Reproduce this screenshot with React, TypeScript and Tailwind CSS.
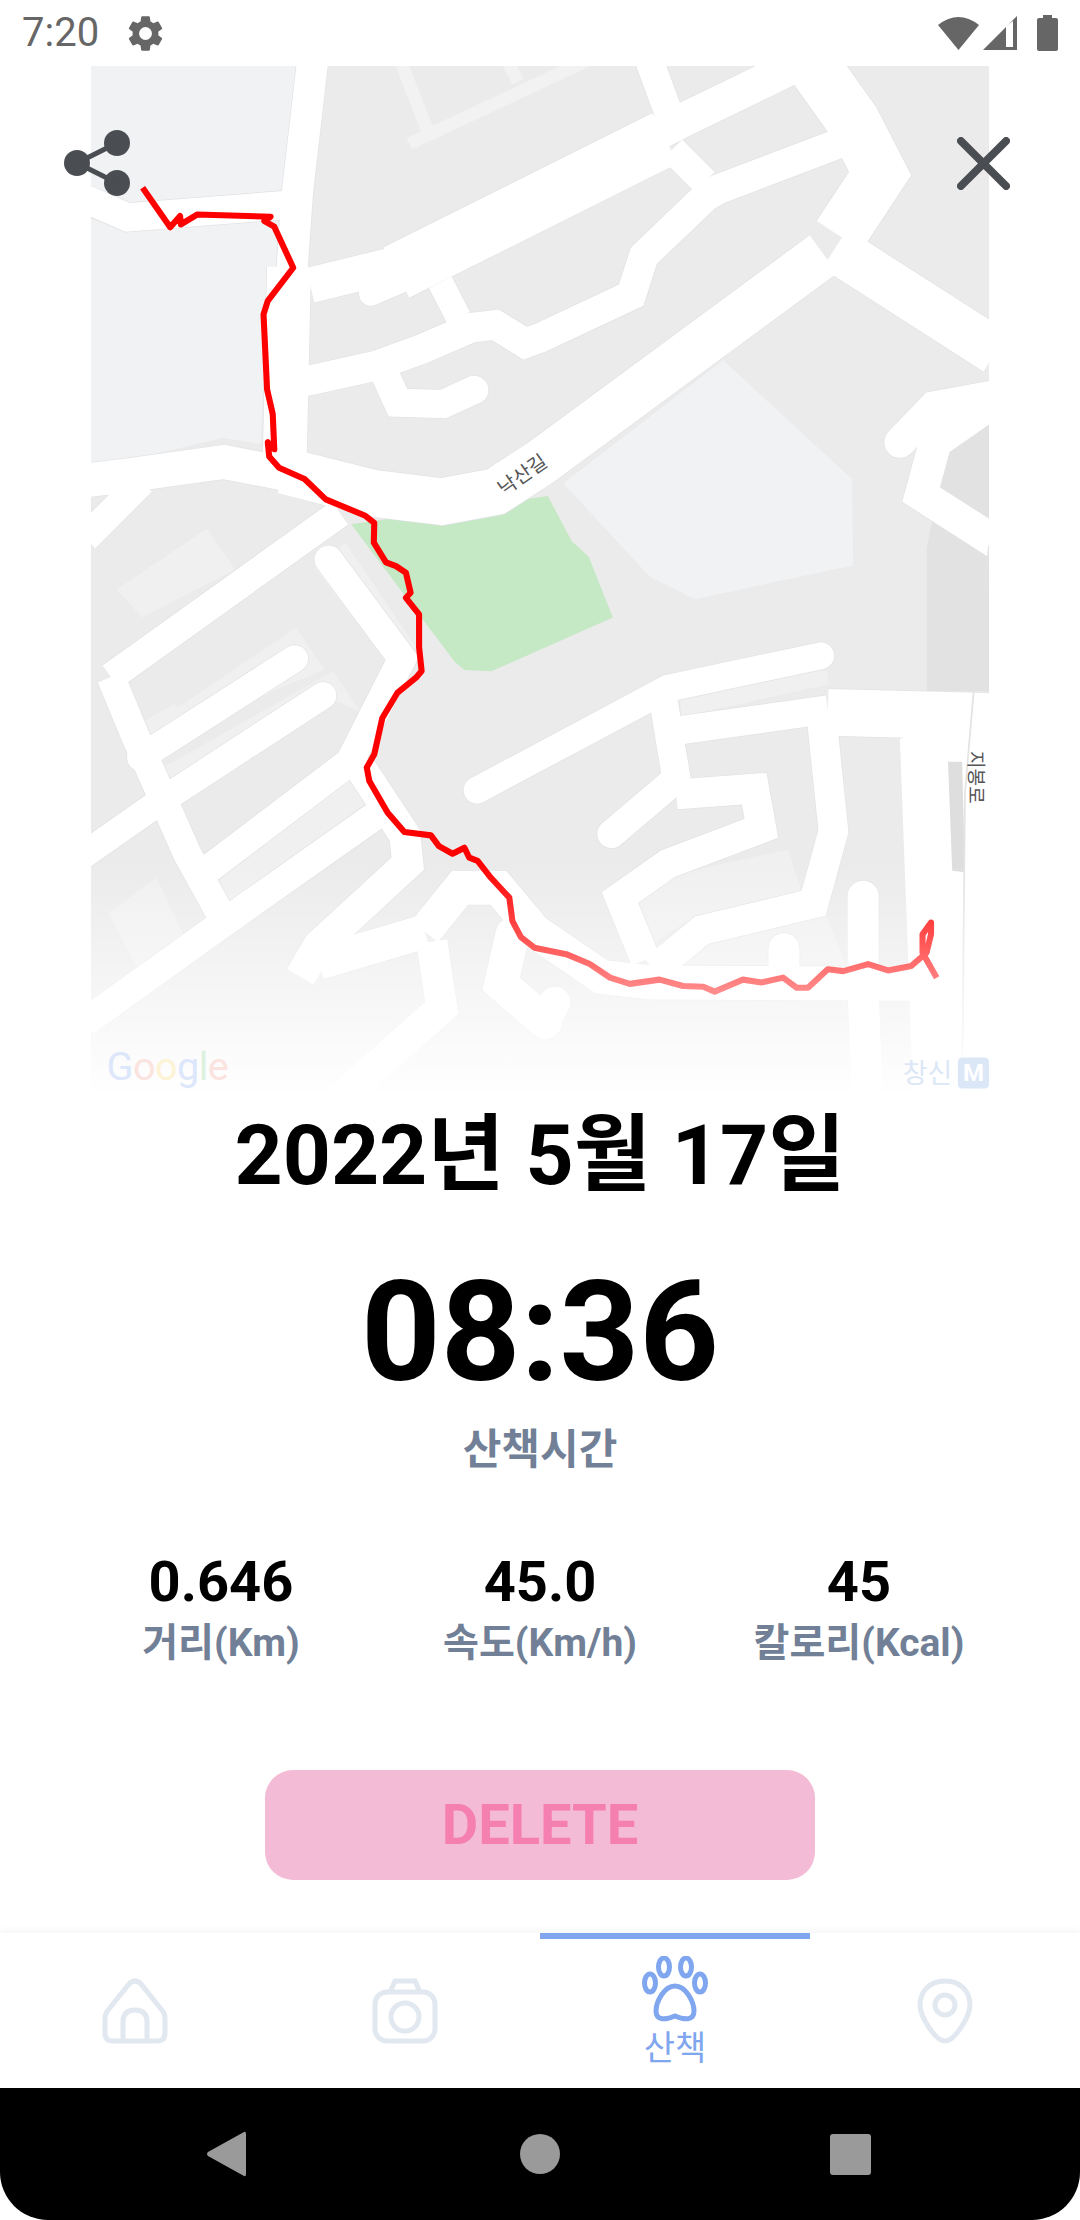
import React from "react";

// roads of the map, in the coordinates of the map's viewBox
const roads: { d: string; w: number; round?: boolean }[] = [
  // upper part
  { d: "M221 40 L210 135 L206 192", w: 22 },
  { d: "M204 188 L201 325", w: 31 },
  { d: "M60 140 L90 153 L205 144", w: 20 },
  { d: "M60 339 L93 335 L158 326 L205 335", w: 24 },
  { d: "M200 332 L263 348 L312 354 L350 347 L381 327 L582 179", w: 33 },
  { d: "M219 201 L280 186", w: 25 },
  { d: "M280 192 L320 172 L470 97", w: 40 },
  { d: "M262 207 L290 195", w: 17, round: true },
  { d: "M311 199 L324 224", w: 18 },
  { d: "M215 269 L265 258 L298 246 L333 231 L350 229 L371 242 L382 238 L446 208 L455 180 L499 138 L508 133 L592 101", w: 21 },
  { d: "M475 105 L498 128", w: 20 },
  { d: "M458 40 L472 78", w: 20 },
  { d: "M460 96 L485 83 L545 54 L565 44", w: 24 },
  { d: "M568 36 L603 85 L622 122 L593 166", w: 38 },
  { d: "M590 175 L704 248", w: 33 },
  { d: "M271 262 L281 284 L313 285 L335 275", w: 20, round: true },
  { d: "M704 279 L660 287 L636 312", w: 22, round: true },
  { d: "M704 282 L661 312 L651 349 L704 383", w: 23 },
  // lower left
  { d: "M60 380 L100 340", w: 20 },
  { d: "M78 478 L240 362", w: 20 },
  { d: "M78 478 L95 519 L132 603 L158 650", w: 20 },
  { d: "M99 535 L208 465", w: 19, round: true },
  { d: "M60 603 L110 568 L228 491", w: 19, round: true },
  { d: "M232 395 L284 465 L247 538 L148 613", w: 20, round: true },
  { d: "M60 722 L156 653 L268 574", w: 20 },
  { d: "M253 540 L286 590 L288 610 L225 668 L212 690", w: 22 },
  { d: "M225 680 L300 658", w: 24 },
  { d: "M300 658 L325 627 L352 627 L378 658 L425 690 L460 694 L650 695", w: 24 },
  { d: "M362 660 L354 695 L385 722", w: 24, round: true },
  { d: "M385 722 L392 708", w: 22, round: true },
  { d: "M305 665 L312 712 L230 785", w: 22 },
  // lower right
  { d: "M580 463 L472 486 L337 558", w: 19, round: true },
  { d: "M468 490 L478 550 L432 589", w: 20, round: true },
  { d: "M478 561 L533 557 L538 585 L472 610 L438 634 L456 678", w: 21 },
  { d: "M478 516 L585 501", w: 20 },
  { d: "M585 503 L704 506", w: 33 },
  { d: "M581 510 L589 587 L575 638 L496 657 L462 685", w: 21 },
  { d: "M610 633 L610 700 L613 775", w: 22, round: true },
  { d: "M554 670 L554 695", w: 22, round: true },
];

const routePoints =
  "100.5,132 120,160 127,152 127.6,158 139,151 191,152.5 186.6,155.6 193.6,159.6 207,188.6 189,212 186,221.6 188.5,274.6 192.5,292 193.6,317 189,312 190,322 197,330 215,338 230,352.4 258,364 264.3,369 264,383 272.6,397 279.7,399.6 286.7,404.3 290,418.4 286.7,422 296,433.7 296,457 297.8,473.8 293.8,478.5 280.8,489 270,507 264.3,532.7 259,542 260.8,551.6 273.8,574 285.6,587.6 304.4,590 310,597.6 319.7,603 328,598.7 331.5,605.8 337.4,608 346.8,620 359.8,634 362,650.6 368,662 377.5,669.4 400,674 416.7,681 431,690.6 445,695 466,692 482.7,696.5 497,697 505,700.5 525,692 538,694 553.4,690.6 563,697.7 571,697.7 585,684.7 596,686 613.5,681 627.6,685.5 644,682.4 654.8,673 658,660 658,651.7 652,660 652,673 662,690.6";

const RouteMap = () => (
  <svg viewBox="64 46 635 724" className="block w-[898px] h-[1024px]">
    <defs>
      <linearGradient id="mapFade" x1="0" y1="610" x2="0" y2="770" gradientUnits="userSpaceOnUse">
        <stop offset="0" stopColor="#fff" stopOpacity="0" />
        <stop offset="1" stopColor="#fff" stopOpacity="0.97" />
      </linearGradient>
    </defs>
    <rect x="64" y="46" width="635" height="724" fill="#ebebeb" />
    <polygon points="64,46 209,46 199,134 91,143 64,131" fill="#f1f2f4" />
    <polygon points="64,154 88,163 196,154 195,192 189,204 184,313 157,309 93,324 88,328 64,328" fill="#f1f2f4" />
    <polygon points="511,254 602,338 603,399 491,423 459,407 398,341" fill="#f1f2f4" />
    <polygon points="655,488 655,387 672,300 699,290 699,488" fill="#e2e2e2" />
    <polygon
      points="248,370 321,467 328,473 347,474 433,436 416,393 404,382 387,350"
      fill="#c5e8c5"
    />
    {/* paler blocks and alleys */}
    <polygon points="82,416 146,373 166,402 100,436" fill="#f0f0f0" />
    <polygon points="102,509 123,497 125,500 209,443 229,473 106,523" fill="#f0f0f0" />
    <polygon points="115,542 235,474 255,503 237,495 119,552" fill="#f0f0f0" />
    <polygon points="154,622 249,549 260,566 163,638" fill="#f0f0f0" />
    <polygon points="222,401 244,383 294,457 274,469" fill="#f0f0f0" />
    <polygon points="480,493 584,473 586,483 482,506" fill="#f0f0f0" />
    <polygon points="451,638 463,665 492,647 566,629 557,600 497,613 477,619" fill="#f0f0f0" />
    <polygon points="584,647 598,682 465,683 500,667" fill="#f0f0f0" />
    <polygon points="76,645 110,620 132,665 100,690" fill="#f0f0f0" />
    <path d="M282 40 L302 92 M289 101 L415 42 M357 40 L366 57" fill="none" stroke="#f2f2f2" strokeWidth="9" />
    {roads.map((r, i) => (
      <path
        key={"edge" + i}
        d={r.d}
        fill="none"
        stroke="#e2e3e6"
        strokeWidth={r.w + 1}
        strokeLinejoin="miter"
        strokeLinecap={r.round ? "round" : "butt"}
      />
    ))}
    <polygon points="636,522 642,682 645,772 701,772 701,490" fill="#fff" />
    {roads.map((r, i) => (
      <path
        key={i}
        d={r.d}
        fill="none"
        stroke="#fff"
        strokeWidth={r.w}
        strokeLinejoin="miter"
        strokeLinecap={r.round ? "round" : "butt"}
      />
    ))}
    <polygon points="670,538 680,538 682,616 673,615" fill="#dedede" />
    <path d="M699 385 L688 490 L682 560 L680 770" fill="none" stroke="#e3e3e3" strokeWidth="1.2" />
    <polyline
      points={routePoints}
      fill="none"
      stroke="#ff0000"
      strokeWidth="4.3"
      strokeLinejoin="round"
    />
    <text
      x="369"
      y="340"
      fontSize="14"
      fill="#555"
      textAnchor="middle"
      transform="rotate(-35 369 335)"
    >
      낙산길
    </text>
    <text
      x="689"
      y="553"
      fontSize="13.5"
      fill="#555"
      textAnchor="middle"
      transform="rotate(90 689 549)"
    >
      지봉로
    </text>
    <rect x="64" y="46" width="635" height="724" fill="url(#mapFade)" />
    <text x="75" y="763" fontSize="28" fontFamily="Roboto, sans-serif" fill="#dde7fb" letterSpacing="-0.4">
      G<tspan fill="#fbe3e0">o</tspan>
      <tspan fill="#fdf3d5">o</tspan>
      <tspan fill="#dde7fb">g</tspan>
      <tspan fill="#dcf1e0">l</tspan>
      <tspan fill="#fbe3e0">e</tspan>
    </text>
    <text x="638" y="765" fontSize="19" fill="#dbe7f7">
      창신
    </text>
    <rect x="677" y="747" width="22" height="22" rx="3" fill="#dbe7f7" />
    <text x="688" y="764" fontSize="17" fontWeight="700" fill="#fff" textAnchor="middle">
      M
    </text>
  </svg>
);

const StatusBar = () => (
  <div className="flex items-center justify-between h-[66px] pl-[22px] pr-[22px] text-[#666]">
    <div className="flex items-center gap-[25px]">
      <span className="text-[40px] leading-none">7:20</span>
      <svg viewBox="0 0 24 24" className="w-[43px] h-[43px]" fill="#666">
        <path d="M19.14 12.94c.04-.3.06-.61.06-.94s-.02-.64-.07-.94l2.03-1.58a.49.49 0 0 0 .12-.61l-1.92-3.32a.49.49 0 0 0-.59-.22l-2.39.96a7 7 0 0 0-1.62-.94l-.36-2.54a.48.48 0 0 0-.48-.41h-3.84a.48.48 0 0 0-.47.41l-.36 2.54c-.59.24-1.13.57-1.62.94l-2.39-.96a.48.48 0 0 0-.59.22L2.74 8.87a.48.48 0 0 0 .12.61l2.03 1.58c-.05.3-.09.63-.09.94s.02.64.07.94l-2.03 1.58a.49.49 0 0 0-.12.61l1.92 3.32c.12.22.37.29.59.22l2.39-.96c.5.38 1.03.7 1.62.94l.36 2.54c.05.24.24.41.48.41h3.84c.24 0 .44-.17.47-.41l.36-2.54c.59-.24 1.13-.56 1.62-.94l2.39.96c.22.08.47 0 .59-.22l1.92-3.32a.48.48 0 0 0-.12-.61l-2.01-1.58zM12 15.6A3.6 3.6 0 1 1 12 8.4a3.6 3.6 0 0 1 0 7.2z" />
      </svg>
    </div>
    <div className="flex items-center">
      <svg viewBox="0 0 41 34" className="w-[41px] h-[34px]" fill="#666">
        <path d="M0 9 Q20.5 -7 41 9 L20.5 34 Z" />
      </svg>
      <svg viewBox="0 0 34 34" className="ml-[4px] w-[34px] h-[34px]">
        <path d="M0 34 L34 0 V34 Z" fill="#666" />
        <path d="M23 10 L30 5 V31 H23 Z" fill="#fff" />
      </svg>
      <svg viewBox="0 0 21 36" className="ml-[20px] w-[21px] h-[36px]" fill="#666">
        <path d="M6 0 H15 V3 H19 Q21 3 21 5 V34 Q21 36 19 36 H2 Q0 36 0 34 V5 Q0 3 2 3 H6 Z" />
      </svg>
    </div>
  </div>
);

const Stat = ({ value, label }: { value: string; label: string }) => (
  <div className="flex flex-col items-center">
    <span className="text-[56px] leading-[64px] font-bold text-black">{value}</span>
    <span className="mt-[3px] text-[39px] leading-[52px] font-bold text-[#718096]">{label}</span>
  </div>
);

const HomeIcon = () => (
  <svg viewBox="0 0 66 66" className="w-[66px] h-[66px]" fill="none" stroke="#e2e8f0" strokeWidth="5">
    <path d="M7 31 L27 6 Q33 0 39 6 L59 31 Q63 35 63 41 V55 Q63 63 55 63 H11 Q3 63 3 55 V41 Q3 35 7 31 Z" />
    <path d="M21 63 V44 Q21 32 33 32 Q45 32 45 44 V63" />
  </svg>
);

const CameraIcon = () => (
  <svg viewBox="0 0 66 66" className="w-[66px] h-[66px]" fill="none" stroke="#e2e8f0" strokeWidth="5">
    <rect x="3" y="14" width="60" height="49" rx="12" />
    <path d="M18 14 L23 3 H43 L48 14" />
    <circle cx="33" cy="39" r="14" />
  </svg>
);

const PawIcon = () => (
  <svg viewBox="0 0 66 66" className="w-[66px] h-[66px]" fill="none" stroke="#7fa6ee" strokeWidth="5">
    <ellipse cx="22" cy="11" rx="5.5" ry="9" />
    <ellipse cx="44" cy="11" rx="5.5" ry="9" />
    <ellipse cx="8" cy="27" rx="5.5" ry="9" />
    <ellipse cx="58" cy="27" rx="5.5" ry="9" />
    <path d="M33 30 C22 30 14 46 14 55 C14 65 24 64 33 60 C42 64 52 65 52 55 C52 46 44 30 33 30 Z" />
  </svg>
);

const PinIcon = () => (
  <svg viewBox="0 0 56 66" className="w-[56px] h-[66px]" fill="none" stroke="#e2e8f0" strokeWidth="5">
    <path d="M28 3 C13 3 3 13 3 27 C3 38 18 63 28 63 C38 63 53 38 53 27 C53 13 43 3 28 3 Z" />
    <circle cx="28" cy="27" r="10" />
  </svg>
);

const TabBar = () => (
  <div className="grid grid-cols-4 h-[155px] bg-white shadow-[0_-3px_6px_rgba(0,0,0,0.04)]">
    <div className="flex justify-center pt-[45px]">
      <HomeIcon />
    </div>
    <div className="flex justify-center pt-[45px]">
      <CameraIcon />
    </div>
    <div className="flex flex-col items-center border-t-[6px] border-[#7fa6ee] pt-[17px]">
      <PawIcon />
      <span className="text-[34px] leading-[44px] mt-[4px] text-[#7fa6ee]">산책</span>
    </div>
    <div className="flex justify-center pt-[45px]">
      <PinIcon />
    </div>
  </div>
);

const NavBar = () => (
  <div className="flex items-center h-[132px] bg-black rounded-b-[48px] pl-[206px]">
    <svg viewBox="0 0 40 46" className="w-[40px] h-[46px] mr-[274px]" fill="#9a9a9a">
      <path d="M38 1 Q40 0 40 3 V43 Q40 46 38 45 L2 25 Q0 23 2 21 Z" />
    </svg>
    <div className="w-[40px] h-[40px] rounded-full bg-[#9a9a9a] mr-[270px]" />
    <div className="w-[41px] h-[41px] rounded-[3px] bg-[#9a9a9a]" />
  </div>
);

export default function App() {
  return (
    <div className="flex flex-col w-[1080px] h-[2220px] bg-white font-['Roboto','Noto_Sans_CJK_KR',sans-serif]">
      <StatusBar />
      {/* map with the two buttons over it */}
      <div className="relative flex justify-center">
        <RouteMap />
        <svg viewBox="0 0 66 66" className="absolute left-[64px] top-[64px] w-[66px] h-[66px]" fill="#4a4d52">
          <circle cx="13" cy="33" r="13" />
          <circle cx="53" cy="13" r="13" />
          <circle cx="53" cy="53" r="13" />
          <path d="M13 33 L53 13 M13 33 L53 53" stroke="#4a4d52" strokeWidth="5" />
        </svg>
        <svg viewBox="0 0 54 54" className="absolute left-[957px] top-[71px] w-[53px] h-[53px]" fill="none" stroke="#4a4d52" strokeWidth="8" strokeLinecap="round">
          <path d="M4 4 L50 50 M50 4 L4 50" />
        </svg>
      </div>
      <h1 className="mt-[16px] text-center text-[84px] leading-[100px] font-bold text-black">2022년 5월 17일</h1>
      <div className="mt-[52px] text-center text-[139px] leading-[150px] font-bold text-black">08:36</div>
      <div className="mt-[16px] text-center text-[42px] leading-[52px] font-bold text-[#718096]">산책시간</div>
      <div className="mt-[74px] grid grid-cols-3 w-[957px] mx-auto">
        <Stat value="0.646" label="거리(Km)" />
        <Stat value="45.0" label="속도(Km/h)" />
        <Stat value="45" label="칼로리(Kcal)" />
      </div>
      <button className="mt-[101px] mx-auto flex items-center justify-center w-[550px] h-[110px] rounded-[28px] bg-[#f3bbd5] text-[#f47fb0] text-[56px] font-bold">
        DELETE
      </button>
      <div className="mt-auto">
        <TabBar />
        <NavBar />
      </div>
    </div>
  );
}
